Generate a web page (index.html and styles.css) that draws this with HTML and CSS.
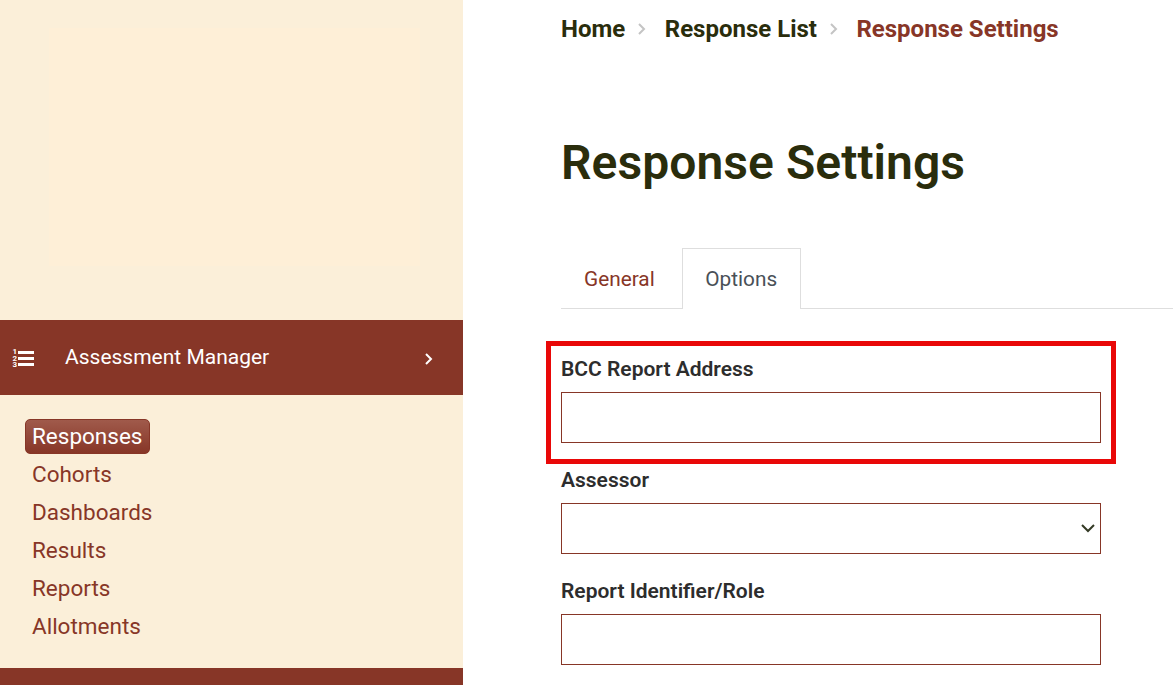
FILE: index.html
```html
<!DOCTYPE html>
<html lang="en">
<head>
<meta charset="utf-8">
<title>Response Settings</title>
<link rel="stylesheet" href="styles.css">
</head>
<body>
<div class="page">
  <aside class="sidebar">
    <div class="logo-area"><div class="logo"></div></div>
    <div class="section-head">
      <svg class="list-icon" width="22" height="22" viewBox="0 0 22 22" aria-hidden="true">
        <rect x="6" y="3" width="16" height="3"/>
        <rect x="6" y="9" width="16" height="3"/>
        <rect x="6" y="15" width="16" height="3"/>
        <text x="0.5" y="6" class="num">1</text>
        <text x="0.5" y="12.5" class="num">2</text>
        <text x="0.5" y="19" class="num">3</text>
      </svg>
      <span class="section-title">Assessment Manager</span>
      <svg class="chev" width="10" height="14" viewBox="0 0 10 14" aria-hidden="true"><path d="M2 2l5 5-5 5" fill="none" stroke="#fff" stroke-width="2"/></svg>
    </div>
    <nav class="menu">
      <a class="menu-item active">Responses</a>
      <a class="menu-item">Cohorts</a>
      <a class="menu-item">Dashboards</a>
      <a class="menu-item">Results</a>
      <a class="menu-item">Reports</a>
      <a class="menu-item">Allotments</a>
    </nav>
    <div class="section-head next"></div>
  </aside>
  <main class="main">
    <ol class="crumbs">
      <li><a>Home</a></li>
      <li class="sep" aria-hidden="true"><svg width="10" height="14" viewBox="0 0 10 14"><path d="M2 2l5 5-5 5" fill="none" stroke="#c4c4c4" stroke-width="2"/></svg></li>
      <li><a>Response List</a></li>
      <li class="sep" aria-hidden="true"><svg width="10" height="14" viewBox="0 0 10 14"><path d="M2 2l5 5-5 5" fill="none" stroke="#c4c4c4" stroke-width="2"/></svg></li>
      <li class="current">Response Settings</li>
    </ol>
    <h1 class="title">Response Settings</h1>
    <div class="tabs">
      <a class="tab">General</a>
      <a class="tab selected">Options</a>
    </div>
    <form class="form">
      <div class="field highlighted">
        <label class="label" for="bcc">BCC Report Address</label>
        <input class="control" id="bcc" type="text">
      </div>
      <div class="field">
        <label class="label" for="assessor">Assessor</label>
        <div class="select-wrap">
          <select class="control select" id="assessor"><option></option></select>
          <svg class="caret" width="16" height="10" viewBox="0 0 16 10" aria-hidden="true"><path d="M2 2l6 6 6-6" fill="none" stroke="#343a25" stroke-width="2"/></svg>
        </div>
      </div>
      <div class="field">
        <label class="label" for="role">Report Identifier/Role</label>
        <input class="control" id="role" type="text">
      </div>
    </form>
  </main>
</div>
</body>
</html>
```
FILE: styles.css
```css
* { box-sizing: border-box; }
html, body { margin: 0; height: 100%; overflow: hidden; background: #fff; }
body { font-family: Roboto, "Liberation Sans", sans-serif; color: #2d2d2d; }
.page { display: flex; height: 685px; overflow: hidden; }

.sidebar { width: 463px; flex: none; background: #fbefd9; overflow: hidden; }
.logo-area { height: 320px; padding: 28px 43px 54px 49px; }
.logo { height: 238px; background: #feefd7; }
.section-head { height: 75px; background: #873627; color: #fff; display: flex; align-items: center; padding: 0 29px 0 12px; }
.list-icon { fill: #fff; flex: none; margin-top: 3px; }
.num { font-size: 8px; font-weight: 700; fill: #fff; font-family: Roboto, sans-serif; }
.section-title { font-size: 21px; margin-left: 31px; flex: 1; margin-top: -2px; }
.chev { flex: none; margin-top: 2px; }

.menu { display: flex; flex-direction: column; align-items: flex-start; padding: 23px 25px 23px; height: 273px; }
.menu-item { font-size: 22.5px; line-height: 38px; height: 38px; padding: 0 7px; color: #873627; }
.menu-item.active { color: #fff; height: 35px; line-height: 33px; margin: 1px 0 1.4px; background: linear-gradient(#a05a4b, #873627); border: 1px solid #873627; border-radius: 5px; padding: 0 7px 0 6px; }

.main { flex: 1; min-width: 0; padding: 0 0 0 98px; }
.crumbs { list-style: none; margin: 0; padding: 13px 0 0; display: flex; align-items: center; font-size: 24px; font-weight: 700; line-height: 32px; color: #2a2d0c; }
.sep { display: flex; width: 39.5px; padding-left: 12px; align-items: center; }
.current { color: #873627; }
.title { margin: 86px 0 0; font-size: 48px; line-height: 63px; font-weight: 600; letter-spacing: 0.06px; color: #2a2d0c; }
.tabs { display: flex; margin-top: 54px; height: 61px; border-bottom: 1px solid #dedede; }
.tab { font-size: 20.8px; line-height: 60px; height: 61px; padding: 0 22px; color: #873627; border: 1px solid transparent; border-bottom: 0; }
.tab.selected { color: #495057; background: #fff; border-color: #dedede; margin-left: 4px; padding: 0 22.5px; }

.form { width: 540px; padding-top: 44px; }
.field { margin-bottom: 21px; position: relative; }
.label { display: block; font-size: 21px; font-weight: 600; line-height: 32px; margin-bottom: 7px; color: #2d2d2d; }
.control { display: block; width: 100%; height: 51px; border: 1px solid #873627; background: #fff; border-radius: 0; padding: 0 12px; font: 20px Roboto, sans-serif; appearance: none; outline: 0; }
.select-wrap { position: relative; }
.caret { position: absolute; right: 5px; top: 20px; }
.highlighted::after { content: ""; position: absolute; left: -15px; right: -15px; top: -12px; bottom: -21px; border: 5px solid #e90808; pointer-events: none; }
```
